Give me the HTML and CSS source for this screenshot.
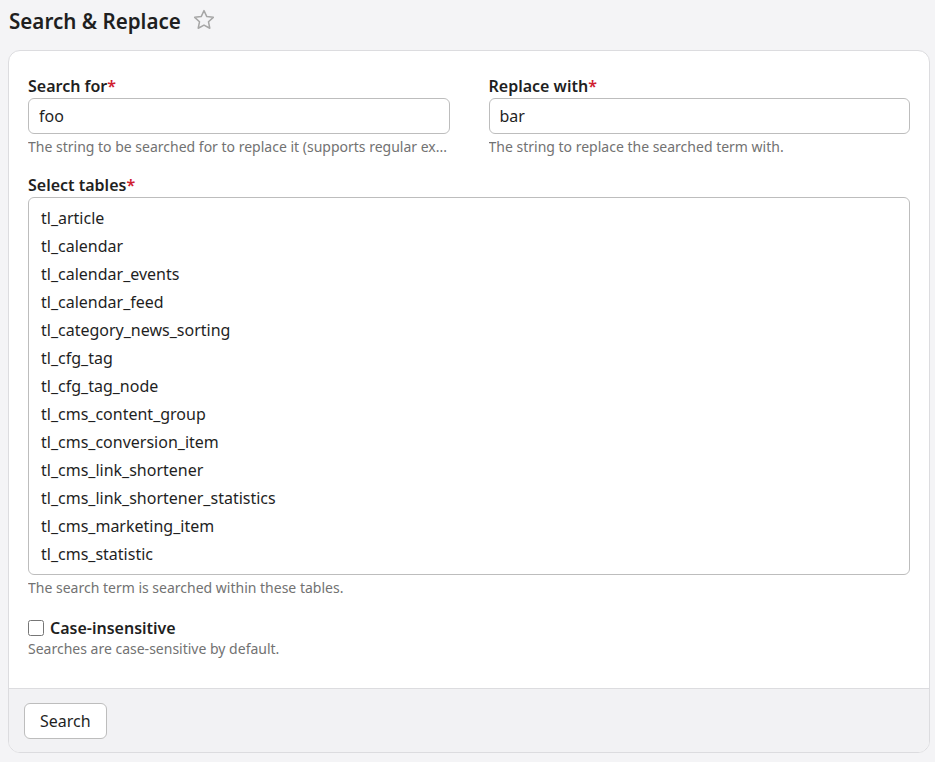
FILE: index.html
```html
<!DOCTYPE html>
<html lang="en">
<head>
  <meta charset="UTF-8" />
  <meta name="viewport" content="width=device-width, initial-scale=1.0" />
  <title>Search &amp; Replace</title>
  <link rel="stylesheet" href="styles.css">
</head>
<body>
  <div class="page-header">
    <h1 class="page-title">Search &amp; Replace</h1>
    <svg class="fav-star" width="24" height="24" viewBox="0 0 24 24" fill="none" stroke="#a6a6a6" stroke-width="1.5" stroke-linejoin="round">
      <path d="M12 2.6l2.8 6 6.5.75-4.8 4.45 1.3 6.45L12 17.05 6.2 20.250l1.3-6.45-4.8-4.45 6.5-.75z"/>
    </svg>
  </div>

  <form class="card">
    <div class="card-body">
      <div class="field-row">
        <div class="field">
          <label class="field-label" for="search">Search for<span class="req">*</span></label>
          <input class="text-input" id="search" type="text" value="foo" />
          <p class="field-help">The string to be searched for to replace it (supports regular ex...</p>
        </div>
        <div class="field">
          <label class="field-label" for="replace">Replace with<span class="req">*</span></label>
          <input class="text-input" id="replace" type="text" value="bar" />
          <p class="field-help">The string to replace the searched term with.</p>
        </div>
      </div>

      <div class="field">
        <div class="field-label">Select tables<span class="req">*</span></div>
        <div class="table-list">
          <div class="table-option">tl_article</div>
          <div class="table-option">tl_calendar</div>
          <div class="table-option">tl_calendar_events</div>
          <div class="table-option">tl_calendar_feed</div>
          <div class="table-option">tl_category_news_sorting</div>
          <div class="table-option">tl_cfg_tag</div>
          <div class="table-option">tl_cfg_tag_node</div>
          <div class="table-option">tl_cms_content_group</div>
          <div class="table-option">tl_cms_conversion_item</div>
          <div class="table-option">tl_cms_link_shortener</div>
          <div class="table-option">tl_cms_link_shortener_statistics</div>
          <div class="table-option">tl_cms_marketing_item</div>
          <div class="table-option">tl_cms_statistic</div>
        </div>
        <p class="field-help">The search term is searched within these tables.</p>
      </div>

      <div class="field field-check">
        <label class="check-label">
          <input type="checkbox" class="check-box" />
          <span>Case-insensitive</span>
        </label>
        <p class="field-help">Searches are case-sensitive by default.</p>
      </div>
    </div>
    <div class="card-footer">
      <button type="button" class="btn">Search</button>
    </div>
  </form>
</body>
</html>
```

FILE: styles.css
```css
body {
  margin: 0;
  padding: 0 5px 10px 8px;
  font-family: "Noto Sans", "Open Sans", sans-serif;
  background: #f4f4f6;
  color: #1f1f1f;
}
.page-header {
  display: flex;
  align-items: center;
  gap: 11px;
  height: 42px;
  padding-left: 1px;
}
.page-title {
  margin: 0;
  font-size: 20.6px;
  font-weight: 600;
  color: #1f1f1f;
}
.fav-star {
  display: block;
  margin-top: -3px;
}
.card {
  margin-top: 8px;
  background: #fff;
  border: 1px solid #dcdcdf;
  border-radius: 12px;
  overflow: hidden;
}
.card-body {
  padding: 24px 19px 19px 19px;
}
.field-row {
  display: grid;
  grid-template-columns: 1fr 1fr;
  gap: 39px;
  margin-bottom: 7px;
}
.field {
  margin-bottom: 10px;
}
.field-label {
  display: block;
  font-size: 16px;
  font-weight: 600;
  line-height: 22px;
  margin-bottom: 1px;
}
.req {
  color: #d0202f;
}
.text-input {
  display: block;
  box-sizing: border-box;
  width: 100%;
  height: 36px;
  padding: 0 10px;
  border: 1px solid #bdbdbd;
  border-radius: 6px;
  font-family: inherit;
  font-size: 16px;
  color: #1f1f1f;
  background: #fff;
}
.field-help {
  margin: 3px 0 0;
  font-size: 14px;
  line-height: 20px;
  color: #727272;
  white-space: nowrap;
  overflow: hidden;
}
.table-list {
  border: 1px solid #bdbdbd;
  border-radius: 6px;
  padding: 6px 12px;
}
.table-option {
  font-size: 16px;
  line-height: 28px;
  color: #1f1f1f;
}
.field-check {
  margin-top: 19px;
}
.check-label {
  display: flex;
  align-items: center;
  gap: 6px;
  font-size: 16px;
  font-weight: 600;
  line-height: 22px;
}
.check-box {
  margin: 0;
  width: 16px;
  height: 16px;
}
.field-check .field-help {
  margin-top: 0;
}
.card-footer {
  background: #f2f2f4;
  border-top: 1px solid #dcdcdf;
  padding: 14px 15px 13px;
}
.btn {
  display: block;
  height: 36px;
  padding: 0 15px;
  border: 1px solid #bdbdbd;
  border-radius: 6px;
  background: #fff;
  font-family: inherit;
  font-size: 16px;
  color: #1f1f1f;
}
```
